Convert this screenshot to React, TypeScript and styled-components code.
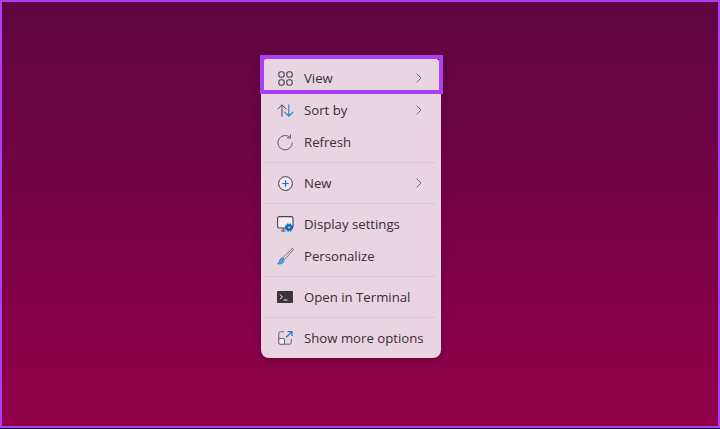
import React from "react";
import styled, { createGlobalStyle } from "styled-components";

const Global = createGlobalStyle`
  html, body { margin: 0; padding: 0; background: #160818; }
  body { width: 720px; height: 429px; overflow: hidden; }
`;

const Desktop = styled.div`
  box-sizing: border-box;
  width: 720px;
  height: 428px;
  border: 2px solid #aa3ff5;
  background: linear-gradient(180deg, #5d0640 0%, #92004a 100%);
  display: flex;
  justify-content: flex-start;
  padding: 56px 0 0 259px;
`;

const Menu = styled.div`
  position: relative;
  box-sizing: border-box;
  width: 180px;
  height: 300px;
  padding: 4px 0;
  border-radius: 8px;
  background: #e9d5e2;
  box-shadow: 0 2px 8px rgba(40, 0, 30, 0.25);
  font-family: "Open Sans", "Noto Sans", sans-serif;
  font-size: 13.2px;
  color: #372e36;
`;

const Row = styled.div`
  height: 32px;
  display: flex;
  align-items: center;
  padding: 0 18px 0 14px;
`;

const IconSlot = styled.span`
  width: 20px;
  height: 20px;
  margin-right: 9px;
  flex: none;
  display: flex;
  align-items: center;
  justify-content: center;
`;

const Label = styled.span`
  flex: 1;
  white-space: nowrap;
  line-height: 32px;
`;

const Separator = styled.div`
  height: 1px;
  margin: 4px 5px 4px 3px;
  background: #dbc7d5;
`;

const Highlight = styled.div`
  position: absolute;
  left: -1px;
  top: -3px;
  width: 183px;
  height: 38.5px;
  box-sizing: border-box;
  border: 4px solid #aa3ff5;
  pointer-events: none;
`;

const Svg = styled.svg`
  display: block;
  overflow: visible;
`;

const ink = "#4a434c";
const blue = "#1a7fd0";

const Chevron = () => (
  <Svg width="8" height="12" viewBox="0 0 8 12" fill="none">
    <path d="M1.500 1.500 6 6l-4.500 4.500" stroke="#6f6670" strokeWidth="1" />
  </Svg>
);

const ViewIcon = () => (
  <Svg width="15" height="15" viewBox="0 0 15 15" fill="none" stroke={ink} strokeWidth="1.100">
    <rect x=".8" y=".8" width="5.400" height="5.400" rx="2.200" />
    <rect x="8.800" y=".8" width="5.400" height="5.400" rx="2.200" />
    <rect x=".8" y="8.800" width="5.400" height="5.400" rx="2.200" />
    <rect x="8.800" y="8.800" width="5.400" height="5.400" rx="2.200" />
  </Svg>
);

const SortIcon = () => (
  <Svg width="17" height="13" viewBox="0 0 17 13" fill="none" strokeWidth="1">
    <path d="M5 12.500V.8M.6 5.200 5 .8l4.400 4.400" stroke={ink} />
    <path d="M11.800.5v11.700M7.400 7.800l4.400 4.400 4.400-4.400" stroke={blue} strokeWidth="1.100" />
  </Svg>
);

const RefreshIcon = () => (
  <Svg width="16" height="16" viewBox="0 0 16 16" fill="none" stroke="#5f5861" strokeWidth="1">
    <path d="M13.300 3.700A7.200 7.200 0 1 0 15.300 8.500" />
    <path d="M13.500.6v3.400h-3.400" />
  </Svg>
);

const NewIcon = () => (
  <Svg width="15" height="15" viewBox="0 0 15 15" fill="none">
    <circle cx="7.500" cy="7.500" r="6.900" stroke="#3c363e" strokeWidth="1" fill="#f4e9f0" />
    <path d="M7.500 4.300v6.400M4.300 7.500h6.400" stroke="#0f73c4" strokeWidth="1.200" />
  </Svg>
);

const DisplayIcon = () => (
  <Svg width="17" height="16" viewBox="0 0 17 16" fill="none">
    <rect x=".6" y=".6" width="15.400" height="11.400" rx="1.600" fill="#f5edf2" stroke="#4a434c" strokeWidth="1.100" />
    <path d="M4 15h4.500M6.200 12v3" stroke="#4a434c" strokeWidth="1" />
    <circle cx="12" cy="11.500" r="3.300" fill="#0f6fc0" stroke="#0f6fc0" strokeWidth="1.800" strokeDasharray="1.600 1" />
    <circle cx="12" cy="11.500" r="1" fill="#e9d5e2" />
  </Svg>
);

const BrushIcon = () => (
  <Svg width="17" height="17" viewBox="0 0 17 17" fill="none">
    <path d="M15 .8 5.800 9.800l1.600 1.600L16.200 2c.5-.9-.4-1.800-1.200-1.200Z" fill="#f5edf2" stroke="#5a535c" strokeWidth=".9" />
    <path d="M5.400 10c-1.600.2-2.500 1.200-2.900 2.600-.3 1.300-1 2.300-2 3.200 2.200.6 4.800.2 6-1.700.6-1.100.5-2-.1-2.700Z" fill="#4a9fe2" stroke="#2a7cc4" strokeWidth=".7" />
  </Svg>
);

const TerminalIcon = () => (
  <Svg width="16" height="12" viewBox="0 0 16 12">
    <rect width="16" height="12" rx=".8" fill="#3a353b" />
    <path d="M2.800 3.500 5.500 5.800 2.800 8" fill="none" stroke="#f1e6ee" strokeWidth="1" />
    <path d="M6.500 9h4" stroke="#f1e6ee" strokeWidth="1" />
  </Svg>
);

const MoreIcon = () => (
  <Svg width="15" height="14" viewBox="0 0 15 14" fill="none">
    <path d="M6 .8H2.300A1.500 1.500 0 0 0 .8 2.300v9.400a1.500 1.500 0 0 0 1.500 1.500h9.400a1.500 1.500 0 0 0 1.500-1.500V8" stroke="#5f5861" strokeWidth=".9" />
    <path d="M.8 7.500h4.200A1.500 1.500 0 0 1 6.500 9v4.200H2.300a1.500 1.500 0 0 1-1.500-1.500Z" fill="#f8f2f6" stroke="#5f5861" strokeWidth=".9" />
    <path d="M8 6.500 14 .6M9.500.6H14v4.500" stroke={blue} strokeWidth="1.200" />
  </Svg>
);

type Item = { label: string; icon: React.ReactNode; more?: boolean; sep?: boolean };

const items: Item[] = [
  { label: "View", icon: <ViewIcon />, more: true },
  { label: "Sort by", icon: <SortIcon />, more: true },
  { label: "Refresh", icon: <RefreshIcon />, sep: true },
  { label: "New", icon: <NewIcon />, more: true, sep: true },
  { label: "Display settings", icon: <DisplayIcon /> },
  { label: "Personalize", icon: <BrushIcon />, sep: true },
  { label: "Open in Terminal", icon: <TerminalIcon />, sep: true },
  { label: "Show more options", icon: <MoreIcon /> },
];

export default function App() {
  return (
    <>
      <Global />
      <Desktop>
        <Menu>
          {items.map((it) => (
            <React.Fragment key={it.label}>
              <Row>
                <IconSlot>{it.icon}</IconSlot>
                <Label>{it.label}</Label>
                {it.more && <Chevron />}
              </Row>
              {it.sep && <Separator />}
            </React.Fragment>
          ))}
          <Highlight />
        </Menu>
      </Desktop>
    </>
  );
}
